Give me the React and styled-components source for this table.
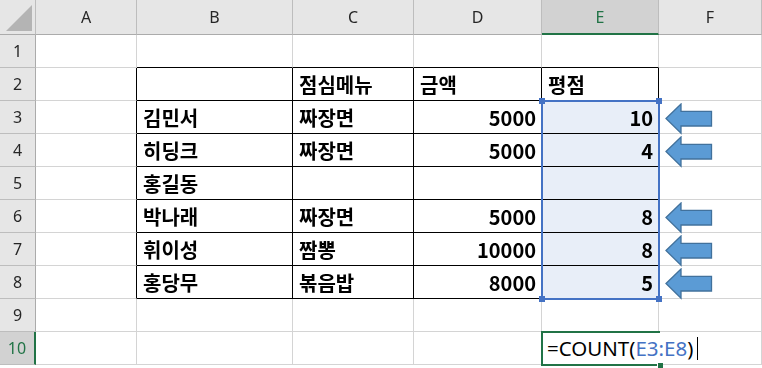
import React from 'react';
import styled, { createGlobalStyle, css } from 'styled-components';

const GlobalStyle = createGlobalStyle`
  html, body {
    margin: 0;
    padding: 0;
    background: #ffffff;
  }
  * {
    box-sizing: border-box;
  }
`;

const COLS = ['A', 'B', 'C', 'D', 'E', 'F'];
const GREEN = '#217346';
const BLUE = '#4472c4';
const GRID = '#d4d4d4';

// row number -> cells by column letter
const DATA = {
    2: { C: '점심메뉴', D: '금액', E: '평점' },
    3: { B: '김민서', C: '짜장면', D: 5000, E: 10 },
    4: { B: '히딩크', C: '짜장면', D: 5000, E: 4 },
    5: { B: '홍길동' },
    6: { B: '박나래', C: '짜장면', D: 5000, E: 8 },
    7: { B: '휘이성', C: '짬뽕', D: 10000, E: 8 },
    8: { B: '홍당무', C: '볶음밥', D: 8000, E: 5 },
};
const ARROW_ROWS = [3, 4, 6, 7, 8];

const inTable = (r, c) => r >= 2 && r <= 8 && c >= 1 && c <= 4;

const Sheet = styled.div`
    display: grid;
    grid-template-columns: 36px 101px 156px 121px 128px 117px 103px;
    grid-template-rows: 35px repeat(10, 33px);
    width: 762px;
    height: 368px;
    overflow: hidden;
    background: #ffffff;
`;

const placed = css`
    grid-row: ${(p) => p.$r};
    grid-column: ${(p) => p.$c};
`;

const Corner = styled.div`
    ${placed}
    position: relative;
    background: #e6e6e6;
    border-right: 1px solid #bdbdbd;
    border-bottom: 1px solid #ababab;
    &::after {
        content: '';
        position: absolute;
        right: 3px;
        bottom: 3px;
        width: 0;
        height: 0;
        border-left: 26px solid transparent;
        border-bottom: 26px solid #b4b4b4;
    }
`;

const ColHeader = styled.div`
    ${placed}
    display: flex;
    align-items: center;
    justify-content: center;
    font-family: 'Noto Sans', 'Liberation Sans', sans-serif;
    font-size: 16px;
    color: ${(p) => (p.$active ? GREEN : '#262626')};
    background: ${(p) => (p.$active ? '#d2d2d2' : '#e6e6e6')};
    border-right: 1px solid #bdbdbd;
    border-bottom: ${(p) => (p.$active ? `2px solid ${GREEN}` : '1px solid #ababab')};
`;

const RowHeader = styled.div`
    ${placed}
    display: flex;
    align-items: center;
    justify-content: center;
    font-family: 'Noto Sans', 'Liberation Sans', sans-serif;
    font-size: 16px;
    color: ${(p) => (p.$active ? GREEN : '#262626')};
    background: ${(p) => (p.$active ? '#d2d2d2' : '#e6e6e6')};
    border-bottom: 1px solid #bdbdbd;
    border-right: ${(p) => (p.$active ? `2px solid ${GREEN}` : '1px solid #ababab')};
`;

const Cell = styled.div`
    ${placed}
    display: flex;
    align-items: center;
    justify-content: ${(p) => (p.$num ? 'flex-end' : 'flex-start')};
    padding: 1px 5px 0 6px;
    font-family: 'Noto Sans CJK KR', 'Noto Sans', sans-serif;
    font-weight: 700;
    font-size: 20px;
    color: #000000;
    white-space: nowrap;
    border-right: 1px solid ${(p) => p.$rightColor};
    border-bottom: 1px solid ${(p) => p.$bottomColor};
`;

const ArrowCell = styled(Cell)`
    align-items: flex-start;
    padding: 2px 0 0 6px;
`;

// no z-index here, so the tint can blend with the cells below
const RangeBox = styled.div`
    grid-row: ${(p) => p.$rows};
    grid-column: ${(p) => p.$c};
    position: relative;
    margin: -1px;
    border: 2px solid ${BLUE};
    pointer-events: none;
`;

// tint multiplied over the cells so the table lines stay black
const RangeFill = styled.div`
    position: absolute;
    inset: 0;
    background: #e8eef8;
    mix-blend-mode: multiply;
`;

const Handle = styled.span`
    position: absolute;
    width: 6px;
    height: 6px;
    background: ${(p) => p.$color};
    ${(p) => (p.$top ? 'top: -4px;' : 'bottom: -4px;')}
    ${(p) => (p.$left ? 'left: -4px;' : 'right: -4px;')}
`;

const EditBox = styled.div`
    grid-row: ${(p) => p.$r};
    grid-column: ${(p) => p.$c};
    position: relative;
    margin: -1px;
    border: 2px solid ${GREEN};
    border-right: none;
    z-index: 3;
`;

const EditText = styled.div`
    position: absolute;
    top: 0;
    bottom: 0;
    left: 0;
    display: flex;
    align-items: center;
    padding: 0 2px 1px 4px;
    background: #ffffff;
    font-family: 'Noto Sans', 'Liberation Sans', sans-serif;
    font-size: 20.5px;
    color: #000000;
    white-space: nowrap;
`;

const FillHandle = styled.span`
    position: absolute;
    right: -3px;
    bottom: -4px;
    width: 6px;
    height: 6px;
    background: ${GREEN};
    border: 1px solid #ffffff;
    border-right: none;
    border-bottom: none;
`;

const Ref = styled.span`
    color: ${BLUE};
`;

const Caret = styled.span`
    display: inline-block;
    width: 1px;
    height: 23px;
    margin-left: 4px;
    background: #000000;
`;

function BlockArrow() {
    return (
        <svg width="48" height="32" viewBox="0 0 48 32">
            <polygon
                points="1,15.5 16,1 16,8.3 46.5,8.3 46.5,23 16,23 16,30.3"
                fill="#5b9bd5"
                stroke="#41719c"
                strokeWidth="1.3"
                strokeLinejoin="miter"
            />
        </svg>
    );
}

function App() {
    const activeCol = 'E';
    const activeRow = 10;

    const cells = [];
    for (let r = 1; r <= 10; r++) {
        cells.push(
            <RowHeader key={`h${r}`} $r={r + 1} $c={1} $active={r === activeRow}>
                {r}
            </RowHeader>
        );
        COLS.forEach((col, i) => {
            const c = i;
            const right = inTable(r, c) || inTable(r, c + 1) ? '#000000' : GRID;
            const bottom = inTable(r, c) || inTable(r + 1, c) ? '#000000' : GRID;
            const value = DATA[r] ? DATA[r][col] : undefined;
            const common = {
                key: `${col}${r}`,
                $r: r + 1,
                $c: i + 2,
                $rightColor: right,
                $bottomColor: bottom,
            };
            if (col === 'F' && ARROW_ROWS.includes(r)) {
                cells.push(
                    <ArrowCell {...common}>
                        <BlockArrow />
                    </ArrowCell>
                );
                return;
            }
            cells.push(
                <Cell {...common} $num={typeof value === 'number'}>
                    {value}
                </Cell>
            );
        });
    }

    return (
        <>
            <GlobalStyle />
            <Sheet>
                <Corner $r={1} $c={1} />
                {COLS.map((col, i) => (
                    <ColHeader key={col} $r={1} $c={i + 2} $active={col === activeCol}>
                        {col}
                    </ColHeader>
                ))}
                {cells}

                {/* referenced range E3:E8 */}
                <RangeBox $rows="4 / 10" $c={6}>
                    <RangeFill />
                    <Handle $color={BLUE} $top $left />
                    <Handle $color={BLUE} $top />
                    <Handle $color={BLUE} $left />
                    <Handle $color={BLUE} />
                </RangeBox>

                {/* cell editor in E10 */}
                <EditBox $r={11} $c={6}>
                    <EditText>
                        =COUNT(<Ref>E3:E8</Ref>)<Caret />
                    </EditText>
                    <FillHandle />
                </EditBox>
            </Sheet>
        </>
    );
}

export default App;
